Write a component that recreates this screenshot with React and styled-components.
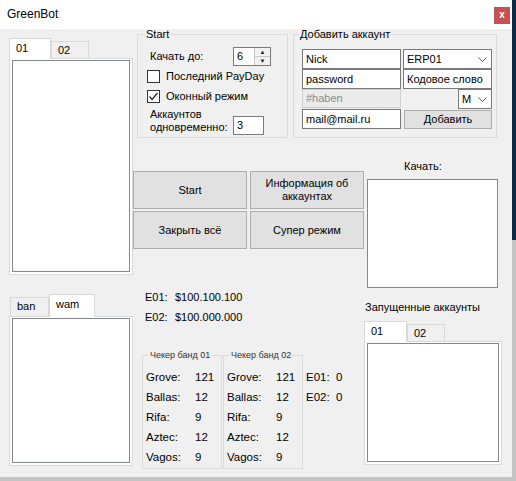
import React from "react";
import styled, { createGlobalStyle } from "styled-components";

const GlobalStyle = createGlobalStyle`
  html, body {
    margin: 0;
    padding: 0;
  }
  body {
    width: 516px;
    height: 481px;
    overflow: hidden;
    background: linear-gradient(to bottom, #0e2847 0, #0e2847 240px, #c4c4c4 240px);
    font-family: "Liberation Sans", Arial, sans-serif;
    font-size: 11px;
    color: #000;
  }
`;

function Chevron() {
  return (
    <svg width="9" height="5" viewBox="0 0 9 5">
      <polyline points="0.5,0.5 4.5,4.5 8.5,0.5" fill="none" stroke="#606060" strokeWidth="1" />
    </svg>
  );
}

function CheckMark() {
  return (
    <svg width="11" height="11" viewBox="0 0 11 11">
      <polyline points="1.5,5.5 4,8.5 9.5,2" fill="none" stroke="#222" strokeWidth="1.2" />
    </svg>
  );
}

function TabControl({ tabs, active, tabsHeight, panelWidth, panelHeight, inset }) {
  return (
    <TabWrap>
      <TabStrip $h={tabsHeight}>
        {tabs.map((t, i) => (
          <Tab key={t.label} $w={t.w} $active={i === active} $first={i === 0 && inset}>
            {t.label}
          </Tab>
        ))}
      </TabStrip>
      <TabPanel $w={panelWidth} $h={panelHeight}>
        <ListBox />
      </TabPanel>
    </TabWrap>
  );
}

function CheckerGroup({ title, rows }) {
  return (
    <Group $w={80} $h={118}>
      <Caption $ml={6} $small>{title}</Caption>
      <CheckerBody>
        {rows.map(([name, val]) => (
          <React.Fragment key={name}>
            <span>{name}</span>
            <span>{val}</span>
          </React.Fragment>
        ))}
      </CheckerBody>
    </Group>
  );
}

const gangs = [
  ["Grove:", "121"],
  ["Ballas:", "12"],
  ["Rifa:", "9"],
  ["Aztec:", "12"],
  ["Vagos:", "9"],
];

export default function App() {
  return (
    <>
      <GlobalStyle />
      <Window>
        <TitleBar>
          <span>GreenBot</span>
          <CloseBtn>x</CloseBtn>
        </TitleBar>
        <Client>
          <LeftCol>
            <Spacer $h={9} />
            <TabControl
              tabs={[{ label: "01", w: 42 }, { label: "02", w: 38 }]}
              active={0}
              tabsHeight={20}
              panelWidth={124}
              panelHeight={217}
            />
            <Spacer $h={19} />
            <TabControl
              tabs={[{ label: "ban", w: 39 }, { label: "wam", w: 46 }]}
              active={1}
              tabsHeight={22}
              panelWidth={124}
              panelHeight={150}
              inset
            />
          </LeftCol>
          <MainArea>
            <TopRow>
              <Group $w={151} $h={109}>
                <Caption $ml={7}>Start</Caption>
                <StartBody>
                  <FieldRow $h={19}>
                    <FieldLabel>Качать до:</FieldLabel>
                    <NumBox>
                      <span>6</span>
                      <Spin>
                        <SpinHalf>▲</SpinHalf>
                        <SpinHalf>▼</SpinHalf>
                      </Spin>
                    </NumBox>
                  </FieldRow>
                  <CheckRow>
                    <CheckBox />
                    Последний PayDay
                  </CheckRow>
                  <CheckRow>
                    <CheckBox>
                      <CheckMark />
                    </CheckBox>
                    Оконный режим
                  </CheckRow>
                  <FieldRow $h={27} $mt={2}>
                    <FieldLabel $multi>
                      Аккаунтов
                      <br />
                      одновременно:
                    </FieldLabel>
                    <TextBox $w={31} $h={19}>3</TextBox>
                  </FieldRow>
                </StartBody>
              </Group>
              <Group $w={204} $h={109} $ml={5}>
                <Caption $ml={5}>Добавить аккаунт</Caption>
                <AddGrid>
                  <TextBox>Nick</TextBox>
                  <Combo>
                    <span>ERP01</span>
                    <Chevron />
                  </Combo>
                  <TextBox>password</TextBox>
                  <TextBox>Кодовое слово</TextBox>
                  <TextBox $disabled $h={19}>#haben</TextBox>
                  <Combo $w={34}>
                    <span>M</span>
                    <Chevron />
                  </Combo>
                  <TextBox>mail@mail.ru</TextBox>
                  <WinButton $small>Добавить</WinButton>
                </AddGrid>
              </Group>
            </TopRow>
            <BottomArea>
              <CenterCol>
                <ButtonGrid>
                  <WinButton>Start</WinButton>
                  <WinButton>
                    Информация об
                    <br />
                    аккаунтах
                  </WinButton>
                  <WinButton>Закрыть всё</WinButton>
                  <WinButton>Супер режим</WinButton>
                </ButtonGrid>
                <Balance>
                  <span>E01:</span>
                  <span>$100.100.100</span>
                  <span>E02:</span>
                  <span>$100.000.000</span>
                </Balance>
                <CheckerRow>
                  <CheckerGroup title="Чекер банд 01" rows={gangs} />
                  <CheckerGroup title="Чекер банд 02" rows={gangs} />
                  <ECounts>
                    <span>E01:</span>
                    <span>0</span>
                    <span>E02:</span>
                    <span>0</span>
                  </ECounts>
                </CheckerRow>
              </CenterCol>
              <RightCol>
                <PlainLabel $mt={21} $pl={40}>Качать:</PlainLabel>
                <ListBox $w={131} $h={109} $mt={6} $ml={3} />
                <PlainLabel $mt={12} $pl={1}>Запущенные аккаунты</PlainLabel>
                <Spacer $h={7} />
                <TabControl
                  tabs={[{ label: "01", w: 43 }, { label: "02", w: 38 }]}
                  active={0}
                  tabsHeight={20}
                  panelWidth={138}
                  panelHeight={124}
                />
              </RightCol>
            </BottomArea>
          </MainArea>
        </Client>
      </Window>
    </>
  );
}

const Window = styled.div`
  width: 512px;
  height: 477px;
  background: #f0f0f0;
  display: flex;
  flex-direction: column;
`;

const TitleBar = styled.div`
  height: 29px;
  flex: none;
  background: #fff;
  display: flex;
  justify-content: space-between;
  align-items: flex-start;
  padding: 0 2px 0 7px;
  box-sizing: border-box;
  font-size: 12px;
  line-height: 29px;
`;

const CloseBtn = styled.div`
  width: 16px;
  height: 17px;
  margin-top: 7px;
  background: #c75050;
  color: #fff;
  font-size: 10px;
  font-weight: bold;
  line-height: 15px;
  text-align: center;
`;

const Client = styled.div`
  display: flex;
  padding-left: 9px;
  flex: 1;
`;

const Spacer = styled.div`
  height: ${(p) => p.$h}px;
  flex: none;
`;

const LeftCol = styled.div`
  width: 124px;
  display: flex;
  flex-direction: column;
`;

const TabWrap = styled.div`
  display: flex;
  flex-direction: column;
`;

const TabStrip = styled.div`
  display: flex;
  align-items: flex-end;
  height: ${(p) => p.$h}px;
`;

const Tab = styled.div`
  position: relative;
  z-index: ${(p) => (p.$active ? 1 : 0)};
  box-sizing: border-box;
  width: ${(p) => p.$w}px;
  height: ${(p) => (p.$active ? "calc(100% + 1px)" : "calc(100% - 3px)")};
  margin-bottom: ${(p) => (p.$active ? "-1px" : "0")};
  margin-left: ${(p) => (p.$first ? "1px" : "0")};
  background: ${(p) => (p.$active ? "#fff" : "#f0f0f0")};
  border: 1px solid #d9d9d9;
  border-bottom: none;
  padding: ${(p) => (p.$active ? "3px" : "2px")} 0 0 6px;
  line-height: 13px;
`;

const TabPanel = styled.div`
  box-sizing: border-box;
  width: ${(p) => p.$w}px;
  height: ${(p) => p.$h}px;
  background: #fff;
  border: 1px solid #d9d9d9;
  padding: 1px 2px 2px 2px;
  display: flex;
`;

const ListBox = styled.div`
  box-sizing: border-box;
  flex: ${(p) => (p.$w ? "none" : "1")};
  width: ${(p) => (p.$w ? `${p.$w}px` : "auto")};
  height: ${(p) => (p.$h ? `${p.$h}px` : "auto")};
  margin-top: ${(p) => p.$mt || 0}px;
  margin-left: ${(p) => p.$ml || 0}px;
  background: #fff;
  border: 1px solid #828790;
`;

const MainArea = styled.div`
  display: flex;
  flex-direction: column;
  width: 369px;
`;

const TopRow = styled.div`
  display: flex;
  padding-left: 4px;
`;

const Group = styled.fieldset`
  box-sizing: border-box;
  margin: 0 0 0 ${(p) => p.$ml || 0}px;
  padding: 0;
  min-width: 0;
  width: ${(p) => p.$w}px;
  height: ${(p) => p.$h}px;
  border: 1px solid #dcdcdc;
`;

const Caption = styled.legend`
  margin-left: ${(p) => p.$ml}px;
  padding: 0 1px;
  font-size: ${(p) => (p.$small ? "9px" : "11px")};
  line-height: ${(p) => (p.$small ? "8px" : "10px")};
  color: ${(p) => (p.$small ? "#333" : "#000")};
`;

const StartBody = styled.div`
  display: flex;
  flex-direction: column;
  padding: 8px 0 0 9px;
`;

const FieldRow = styled.div`
  display: flex;
  align-items: ${(p) => (p.$h > 20 ? "flex-end" : "center")};
  height: ${(p) => p.$h}px;
  margin-top: ${(p) => p.$mt || 0}px;
`;

const FieldLabel = styled.div`
  width: 86px;
  padding-left: 3px;
  box-sizing: border-box;
  line-height: 13px;
  align-self: ${(p) => (p.$multi ? "flex-start" : "center")};
`;

const NumBox = styled.div`
  box-sizing: border-box;
  width: 38px;
  height: 19px;
  background: #fff;
  border: 1px solid #7a7a7a;
  display: flex;
  justify-content: space-between;
  padding-left: 3px;
  line-height: 17px;
`;

const Spin = styled.div`
  width: 15px;
  display: flex;
  flex-direction: column;
  border-left: 1px solid #c8c8c8;
`;

const SpinHalf = styled.div`
  flex: 1;
  font-size: 6px;
  line-height: 8px;
  text-align: center;
  color: #222;
  background: #f2f2f2;
  & + & {
    border-top: 1px solid #c8c8c8;
  }
`;

const CheckRow = styled.label`
  display: flex;
  align-items: center;
  gap: 6px;
  height: 20px;
`;

const CheckBox = styled.span`
  box-sizing: border-box;
  width: 13px;
  height: 13px;
  background: #fff;
  border: 1px solid #333;
  display: flex;
  align-items: center;
  justify-content: center;
`;

const TextBox = styled.div`
  box-sizing: border-box;
  width: ${(p) => (p.$w ? `${p.$w}px` : "auto")};
  height: ${(p) => p.$h || 20}px;
  background: ${(p) => (p.$disabled ? "#ebebeb" : "#fff")};
  border: 1px solid ${(p) => (p.$disabled ? "#cfcfcf" : "#7a7a7a")};
  color: ${(p) => (p.$disabled ? "#8a8a8a" : "#000")};
  padding: 0 3px;
  line-height: ${(p) => (p.$h || 20) - 2}px;
  white-space: nowrap;
  overflow: hidden;
`;

const AddGrid = styled.div`
  display: grid;
  grid-template-columns: 99px 89px;
  grid-auto-rows: 20px;
  column-gap: 2px;
  padding: 10px 0 0 8px;
`;

const Combo = styled.div`
  box-sizing: border-box;
  justify-self: end;
  width: ${(p) => (p.$w ? `${p.$w}px` : "100%")};
  height: 20px;
  background: #fff;
  border: 1px solid #7a7a7a;
  display: flex;
  justify-content: space-between;
  align-items: center;
  padding: 0 4px 0 3px;
`;

const WinButton = styled.div`
  box-sizing: border-box;
  background: #e1e1e1;
  border: 1px solid #adadad;
  display: flex;
  align-items: center;
  justify-content: center;
  text-align: center;
  line-height: 13px;
  margin: ${(p) => (p.$small ? "1px 0 0 1px" : "0")};
  height: ${(p) => (p.$small ? "19px" : "auto")};
`;

const BottomArea = styled.div`
  display: flex;
`;

const CenterCol = styled.div`
  width: 231px;
  display: flex;
  flex-direction: column;
`;

const ButtonGrid = styled.div`
  display: grid;
  grid-template-columns: 114px 114px;
  grid-auto-rows: 38px;
  gap: 2px 3px;
  margin-top: 33px;
`;

const Balance = styled.div`
  display: grid;
  grid-template-columns: 30px auto;
  grid-auto-rows: 20px;
  align-items: center;
  margin-top: 38px;
  padding-left: 12px;
`;

const CheckerRow = styled.div`
  display: flex;
  gap: 1px;
  margin-top: 24px;
  padding-left: 9px;
`;

const CheckerBody = styled.div`
  display: grid;
  grid-template-columns: 49px auto;
  grid-auto-rows: 20px;
  align-items: center;
  padding: 8px 0 0 3px;
  font-size: 11.5px;
`;

const ECounts = styled.div`
  display: grid;
  grid-template-columns: 30px auto;
  grid-auto-rows: 20px;
  align-content: start;
  align-items: center;
  padding: 16px 0 0 2px;
  font-size: 11.5px;
`;

const RightCol = styled.div`
  width: 138px;
  display: flex;
  flex-direction: column;
`;

const PlainLabel = styled.div`
  margin-top: ${(p) => p.$mt}px;
  padding-left: ${(p) => p.$pl}px;
  line-height: 14px;
`;
